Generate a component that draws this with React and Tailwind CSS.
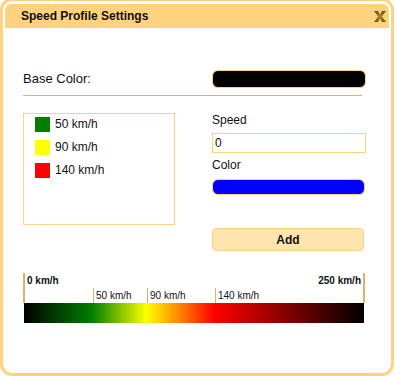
import React from 'react'

const legend = [
  { color: 'bg-[#008000]', label: '50 km/h' },
  { color: 'bg-[#ffff00]', label: '90 km/h' },
  { color: 'bg-[#ff0000]', label: '140 km/h' },
]

const ticks = [
  { pos: 'left-[68px]', label: '50 km/h' },
  { pos: 'left-[122px]', label: '90 km/h' },
  { pos: 'left-[190px]', label: '140 km/h' },
]

const CloseIcon = () => (
  <svg width="12" height="11" viewBox="0 0 12 11">
    <defs>
      <linearGradient id="xg" x1="0" y1="0" x2="0" y2="1">
        <stop offset="0" stopColor="#6a4c0a" />
        <stop offset="0.5" stopColor="#a8883a" />
        <stop offset="1" stopColor="#72540e" />
      </linearGradient>
    </defs>
    <path d="M0 0 H4 L6 3.5 L8 0 H12 L8 5.5 L12 11 H8 L6 7.5 L4 11 H0 L4 5.5 Z" fill="url(#xg)" />
  </svg>
)

const App = () => {
  return (
    <div className="w-[396px] h-[376px] overflow-hidden bg-white font-['Liberation_Sans',Arial,sans-serif] text-[#111]">
      <div className="-mt-[2px] w-[394px] h-[378px] box-border border-[3px] border-[#ffd27f] rounded-[12px] pt-[3px] px-[2px] bg-white">
        {/* title bar */}
        <div className="h-[24px] rounded-t-[6px] bg-[#ffd27f] flex items-center justify-between pl-[16px] pr-[3px]">
          <div className="text-[12px] font-bold text-[#111]">Speed Profile Settings</div>
          <CloseIcon />
        </div>

        <div className="px-[18px]">
          {/* base color */}
          <div className="mt-[42px] flex items-center h-[18px]">
            <div className="w-[189px] text-[13px]">Base Color:</div>
            <div className="w-[154px] h-[18px] rounded-[6px] border border-[#ffd27f] bg-black"></div>
          </div>
          <div className="mt-[7px] h-px w-[339px] bg-[#d7b46a]"></div>

          <div className="mt-[17px] flex">
            <div className="w-[189px]">
              <div className="w-[152px] h-[112px] border border-[#ffd27f] pl-[11px] pt-[3px] flex flex-col gap-[8px]">
                {legend.map((item, index) => (
                  <div key={index} className="flex items-center gap-[5px] h-[15px]">
                    <div className={`w-[15px] h-[15px] ${item.color}`}></div>
                    <div className="text-[12px] leading-[15px]">{item.label}</div>
                  </div>
                ))}
              </div>
            </div>
            <div className="w-[154px] flex flex-col">
              <div className="text-[12px] leading-[14px]">Speed</div>
              <input
                className="mt-[6px] h-[20px] w-[154px] border border-[#ffd27f] px-[2px] text-[12px] focus:outline-none"
                defaultValue="0"
              />
              <div className="mt-[5px] text-[12px] leading-[14px]">Color</div>
              <div className="mt-[7px] h-[16px] w-[153px] rounded-[6px] border border-[#ffd27f] bg-[#0000ff]"></div>
              <button className="mt-[33px] h-[23px] w-[152px] rounded-[4px] border border-[#ffd27f] bg-[#ffe4ad] text-[12px] font-bold text-[#111]">
                Add
              </button>
            </div>
          </div>

          {/* speed scale */}
          <div className="mt-[22px] w-[342px]">
            <div className="relative h-[30px] border-l-2 border-r-2 border-[#deb06a] flex justify-between items-start px-[2px] pt-[2px] text-[10px] leading-[12px]">
              <span className="font-bold">0 km/h</span>
              <span className="font-bold">250 km/h</span>
              {ticks.map((t, index) => (
                <div key={index} className={`absolute top-[15px] h-[15px] ${t.pos} border-l border-[#deb06a] pl-[2px] pt-[2px] text-[10px] leading-[12px] whitespace-nowrap`}>
                  {t.label}
                </div>
              ))}
            </div>
            <div className="mx-[1px] h-[20px] bg-[linear-gradient(to_right,#000_0%,#008000_20%,#ffff00_36%,#ff0000_56%,#000_100%)]"></div>
          </div>
        </div>
      </div>
    </div>
  )
}

export default App
